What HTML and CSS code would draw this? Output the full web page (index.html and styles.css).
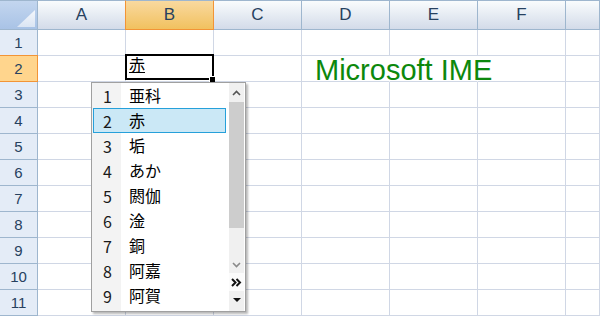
FILE: index.html
```html
<!DOCTYPE html>
<html lang="ja">
<head>
    <meta charset="UTF-8">
    <meta name="viewport" content="width=device-width, initial-scale=1.0">
    <title>Microsoft IME</title>
    <link rel="stylesheet" href="styles.css">
</head>
<body>
    <div class="sheet">
        <div class="corner"></div>
        <div class="col-head">A</div>
        <div class="col-head sel">B</div>
        <div class="col-head">C</div>
        <div class="col-head">D</div>
        <div class="col-head">E</div>
        <div class="col-head">F</div>
        <div class="col-head"></div>

        <div class="row-head">1</div><div class="cell"></div><div class="cell"></div><div class="cell"></div><div class="cell"></div><div class="cell"></div><div class="cell"></div><div class="cell"></div>
        <div class="row-head sel">2</div><div class="cell"></div>
        <div class="cell active"><span class="composing">赤</span></div>
        <div class="cell"></div>
        <div class="cell spill"><span class="note">Microsoft IME</span></div>
        <div class="cell spill"></div><div class="cell"></div><div class="cell"></div>
        <div class="row-head">3</div><div class="cell"></div><div class="cell"></div><div class="cell"></div><div class="cell"></div><div class="cell"></div><div class="cell"></div><div class="cell"></div>
        <div class="row-head">4</div><div class="cell"></div><div class="cell"></div><div class="cell"></div><div class="cell"></div><div class="cell"></div><div class="cell"></div><div class="cell"></div>
        <div class="row-head">5</div><div class="cell"></div><div class="cell"></div><div class="cell"></div><div class="cell"></div><div class="cell"></div><div class="cell"></div><div class="cell"></div>
        <div class="row-head">6</div><div class="cell"></div><div class="cell"></div><div class="cell"></div><div class="cell"></div><div class="cell"></div><div class="cell"></div><div class="cell"></div>
        <div class="row-head">7</div><div class="cell"></div><div class="cell"></div><div class="cell"></div><div class="cell"></div><div class="cell"></div><div class="cell"></div><div class="cell"></div>
        <div class="row-head">8</div><div class="cell"></div><div class="cell"></div><div class="cell"></div><div class="cell"></div><div class="cell"></div><div class="cell"></div><div class="cell"></div>
        <div class="row-head">9</div><div class="cell"></div><div class="cell"></div><div class="cell"></div><div class="cell"></div><div class="cell"></div><div class="cell"></div><div class="cell"></div>
        <div class="row-head">10</div><div class="cell"></div><div class="cell"></div><div class="cell"></div><div class="cell"></div><div class="cell"></div><div class="cell"></div><div class="cell"></div>
        <div class="row-head">11</div><div class="cell"></div><div class="cell"></div><div class="cell"></div><div class="cell"></div><div class="cell"></div><div class="cell"></div><div class="cell"></div>
    </div>

    <!-- IME candidate window -->
    <div class="ime-list">
        <div class="candidates">
            <div class="cand"><span class="num">1</span><span class="word">亜科</span></div>
            <div class="cand sel"><span class="num">2</span><span class="word">赤</span></div>
            <div class="cand"><span class="num">3</span><span class="word">垢</span></div>
            <div class="cand"><span class="num">4</span><span class="word">あか</span></div>
            <div class="cand"><span class="num">5</span><span class="word">閼伽</span></div>
            <div class="cand"><span class="num">6</span><span class="word">淦</span></div>
            <div class="cand"><span class="num">7</span><span class="word">銅</span></div>
            <div class="cand"><span class="num">8</span><span class="word">阿嘉</span></div>
            <div class="cand"><span class="num">9</span><span class="word">阿賀</span></div>
        </div>
        <div class="scrollbar">
            <div class="sb-up">
                <svg width="9" height="6" viewBox="0 0 9 6"><path d="M1 5L4.5 1.5L8 5" fill="none" stroke="#555" stroke-width="1.6"/></svg>
            </div>
            <div class="sb-thumb"></div>
            <div class="sb-track">
                <svg width="9" height="6" viewBox="0 0 9 6"><path d="M1 1L4.5 4.5L8 1" fill="none" stroke="#8a8a8a" stroke-width="1.6"/></svg>
            </div>
            <div class="sb-expand">
                <svg width="11" height="9" viewBox="0 0 11 9"><path d="M1 1l3.5 3.5L1 8M5.5 1L9 4.5 5.5 8" fill="none" stroke="#111" stroke-width="2"/></svg>
            </div>
            <div class="sb-page">
                <svg width="8" height="4" viewBox="0 0 8 4"><path d="M0 0h8L4 4z" fill="#111"/></svg>
            </div>
        </div>
    </div>
</body>
</html>
```

FILE: styles.css
```css
html, body {
    margin: 0;
    padding: 0;
    background-color: #fff;
    overflow: hidden;
}
body {
    width: 600px;
    height: 318px;
    position: relative;
    font-family: "Liberation Sans", Arial, sans-serif;
}
.sheet {
    display: grid;
    width: 600px;
    height: 318px;
    overflow: hidden;
    grid-template-columns: 38px repeat(6, 88px) 1fr;
    grid-template-rows: 30px repeat(11, 26px) 2px;
}
.sheet > div {
    box-sizing: border-box;
}
.corner {
    position: relative;
    background: linear-gradient(#c3d6ef, #a9c3e6);
    border-top: 1px solid #9eb6ce;
    border-right: 1px solid #9eb6ce;
    border-bottom: 1px solid #9eb6ce;
}
.corner::after {
    content: "";
    position: absolute;
    right: 2px;
    bottom: 2px;
    width: 18px;
    height: 17px;
    background: linear-gradient(#f4f7fc, #dbe5f3);
    clip-path: polygon(100% 0, 100% 100%, 0 100%);
}
.col-head {
    background: linear-gradient(#f9fcfd, #d3dbe9);
    border-top: 1px solid #9eb6ce;
    border-right: 1px solid #9eb6ce;
    border-bottom: 1px solid #9eb6ce;
    color: #27415f;
    font-size: 17px;
    line-height: 28px;
    text-align: center;
}
.col-head.sel {
    margin-left: -1px;
    background: linear-gradient(#f9d99f, #f1c15f);
    border-left: 1px solid #f29436;
    border-right-color: #f29436;
    border-bottom-color: #f29436;
}
.row-head {
    background-color: #e4ecf7;
    border-right: 1px solid #9eb6ce;
    border-bottom: 1px solid #9eb6ce;
    color: #27415f;
    font-size: 15px;
    line-height: 25px;
    text-align: center;
}
.row-head.sel {
    margin-top: -1px;
    background-color: #ffd58d;
    border-top: 1px solid #f29436;
    border-right-color: #f29436;
    border-bottom-color: #f29436;
}
.cell {
    border-right: 1px solid #d0d7e5;
    border-bottom: 1px solid #d0d7e5;
    white-space: nowrap;
}
/* text running over into the next cells hides their gridlines */
.cell.spill {
    border-right-color: #fff;
}
.cell.active {
    position: relative;
    padding-left: 3px;
}
.cell.active::before {
    content: "";
    position: absolute;
    left: -1px;
    right: -1px;
    top: -2px;
    bottom: 1px;
    border: 2px solid #000;
}
.cell.active::after {
    content: "";
    position: absolute;
    right: -2px;
    bottom: -1px;
    width: 5px;
    height: 5px;
    background-color: #000;
    border-left: 1px solid #fff;
    border-top: 1px solid #fff;
}
.composing {
    display: block;
    font-family: "Noto Sans CJK JP", sans-serif;
    font-size: 16px;
    line-height: 16px;
    color: #000;
    text-decoration: underline;
    text-underline-offset: 1px;
}
.note {
    position: relative;
    z-index: 1;
    display: block;
    padding-left: 13px;
    font-size: 29px;
    line-height: 26px;
    padding-top: 1px;
    color: #0c880c;
}

.ime-list {
    position: absolute;
    left: 91px;
    top: 82px;
    width: 155px;
    height: 230px;
    box-sizing: border-box;
    display: flex;
    background-color: #fff;
    border: 1px solid #a0a0a0;
    box-shadow: 2px 2px 2px rgba(0, 0, 0, 0.28);
    font-family: "Noto Sans CJK JP", sans-serif;
    font-size: 16px;
}
.candidates {
    width: 137px;
    padding-left: 1px;
    box-sizing: border-box;
    background: linear-gradient(to right, #f3f3f3 29px, #fff 29px);
}
.cand {
    display: flex;
    width: 133px;
    height: 25px;
    box-sizing: border-box;
    border: 1px solid transparent;
    line-height: 23px;
    color: #000;
}
.cand.sel {
    background-color: #cbe8f6;
    border-color: #26a0da;
}
.num {
    width: 27px;
    text-align: center;
    padding-top: 1px;
    line-height: 22px;
    color: #1a1a1a;
}
.word {
    padding-left: 8px;
}
.scrollbar {
    width: 15px;
    display: flex;
    flex-direction: column;
    background-color: #f0f0f0;
}
.sb-up {
    height: 19px;
    display: flex;
    justify-content: center;
    padding-top: 7px;
    box-sizing: border-box;
}
.sb-thumb {
    height: 126px;
    background-color: #cdcdcd;
}
.sb-track {
    height: 45px;
    display: flex;
    justify-content: center;
    align-items: flex-end;
    padding-bottom: 5px;
    box-sizing: border-box;
}
.sb-expand {
    height: 18px;
    display: flex;
    justify-content: center;
    align-items: center;
    background-color: #fbfbfb;
}
.sb-page {
    flex: 1;
    display: flex;
    justify-content: center;
    padding-top: 7px;
    box-sizing: border-box;
}
```
